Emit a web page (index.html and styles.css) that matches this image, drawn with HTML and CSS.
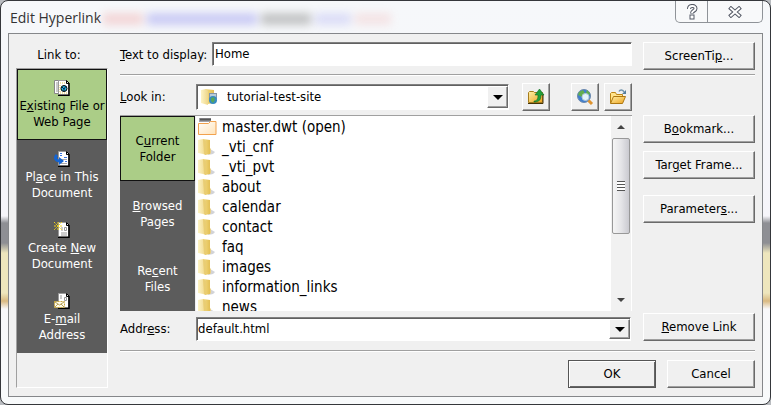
FILE: index.html
```html
<!DOCTYPE html>
<html lang="en">
<head>
<meta charset="utf-8">
<title>Edit Hyperlink</title>
<link rel="stylesheet" href="styles.css">
</head>
<body>
<svg class="defs" aria-hidden="true">
  <defs>
    <linearGradient id="gold" x1="0" x2="1"><stop offset="0" stop-color="#f3dc85"/><stop offset="1" stop-color="#e3bf55"/></linearGradient>
    <linearGradient id="pale-gold" x1="0" x2="1"><stop offset="0" stop-color="#fdf3c4"/><stop offset="1" stop-color="#eed68a"/></linearGradient>
    <linearGradient id="amber" x1="0" y1="0" x2="1" y2="1"><stop offset="0" stop-color="#fff0a8"/><stop offset="1" stop-color="#eda21d"/></linearGradient>
    <linearGradient id="cream" x1="0" y1="0" x2="1" y2="1"><stop offset="0" stop-color="#fff"/><stop offset="1" stop-color="#ffe3b8"/></linearGradient>
    <symbol id="folder" viewBox="0 0 18 18">
      <path d="M12 11l5 3-2 2-5 1z" fill="#b4b6bc" opacity=".6"/>
      <path d="M5 1l7 1v14l-5 1z" fill="url(#gold)"/>
      <path d="M0 2l5-1 3 2v14l-3-1-5-1z" fill="url(#pale-gold)"/>
      <path d="M5 1l3 2v14l-2-1z" fill="#e9cd74"/>
      <path d="M12 10l1 1v4l-1 1z" fill="#e9d088"/>
    </symbol>
    <symbol id="page" viewBox="0 0 16 16">
      <path d="M4.500 .5h8l2 3v11h-10z" fill="#fff" stroke="#999"/>
      <path d="M15 4v11.500H4" fill="none" stroke="#000" stroke-width="1.500"/>
      <path d="M12.500 .5v3h3z" fill="#ddd" stroke="#000"/>
    </symbol>
  </defs>
</svg>
<main class="dialog">
  <header class="titlebar">
    <h1>Edit Hyperlink</h1>
    <div class="glass-text" aria-hidden="true"><i class="red"></i><i class="blue"></i><i class="gray"></i><i class="blue pale"></i><i class="red pale"></i></div>
    <div class="window-buttons">
      <button class="help" aria-label="Help"><svg width="12" height="16" viewBox="0 0 12 16"><path d="M3 5c0-4 6.500-4 6.500-.5 0 2.500-3.500 2-3.500 5" fill="none" stroke="#555a66" stroke-width="4"/><rect x="4" y="11" width="4" height="4" fill="#fff" stroke="#555a66"/><path d="M2 5h2M3 5c0-4 6.500-4 6.500-.5 0 2.500-3.500 2-3.500 4.500" fill="none" stroke="#fff" stroke-width="2"/></svg></button>
      <button class="close" aria-label="Close"><svg width="14" height="12" viewBox="0 0 14 12"><path d="M3 2.500l8 7M11 2.500l-8 7" stroke="#555a66" stroke-width="4" stroke-linecap="square"/><path d="M3 2.500l8 7M11 2.500l-8 7" stroke="#fff" stroke-width="2" stroke-linecap="square"/></svg></button>
    </div>
  </header>
  <form class="content">
    <nav class="link-to" aria-labelledby="link-to-label">
      <p id="link-to-label">Link to:</p>
      <div class="places">
        <button type="button" class="selected">
          <svg width="16" height="16"><path d="M.5 .5h8v13h-8z" fill="#fff" stroke="#888"/><path d="M2 3h2M2 5h2M2 7h2M2 9h2M2 11h2" stroke="#999"/><use href="#page" width="16" height="16"/><path d="M6 3h6M6 13h8M6 5v7" stroke="#e8c84c" stroke-dasharray="1 1" fill="none"/><circle cx="10" cy="8.500" r="3" fill="#25b5d8" stroke="#000"/><path d="M8 7l2 2 2-3M10 9v2" stroke="#001a50" fill="none"/></svg>
          <span>E<u>x</u>isting File or<br>Web Page</span>
        </button>
        <button type="button">
          <svg width="16" height="16"><use href="#page" width="16" height="16"/><path d="M6 2.500h2M6 4.500h2M10 6.500h3M7 10.500h2M11 10.500h2" stroke="#3c78e0"/><path d="M7 8.500h6M7 12.500h6" stroke="#aaa"/><path d="M3 4c-3 3-1 6 3 6" fill="none" stroke="#1464d2" stroke-width="3"/><path d="M5 6l5 4-5 4z" fill="#1464d2"/></svg>
          <span>Pl<u>a</u>ce in This<br>Document</span>
        </button>
        <button type="button">
          <svg width="16" height="16"><use href="#page" width="16" height="16"/><path d="M7 6h2M7 8h2M7 11h6M7 13h6M10.500 5.500h2v3h-2z" stroke="#999" fill="none"/><path d="M4 0v8M0 4h8M0 0l8 8M8 0l-8 8" stroke="#f2d21b" stroke-dasharray="2 1"/></svg>
          <span>Create <u>N</u>ew<br>Document</span>
        </button>
        <button type="button">
          <svg width="16" height="16"><use href="#page" width="16" height="16"/><path d="M6 3h2M6 5h2M10.500 4.500h2v3h-2z" stroke="#999" fill="none"/><path d="M.5 8.500h10v6h-10z" fill="#fffbe8" stroke="#c9a63c" stroke-dasharray="2 1"/><path d="M1 9l4.500 3L10 9M1 14l3-3M10 14l-3-3" fill="none" stroke="#b8a25c"/></svg>
          <span>E-<u>m</u>ail<br>Address</span>
        </button>
      </div>
    </nav>
    <div class="fields">
      <section class="row display-row">
        <label for="display"><u>T</u>ext to display:</label>
        <input id="display" class="sunken" type="text" value="Home">
        <button type="button" class="push">ScreenTi<u>p</u>...</button>
      </section>
      <section class="browser">
        <div class="browse-main">
          <div class="lookin">
            <label class="field-label" for="lookin"><u>L</u>ook in:</label>
            <div class="combo sunken">
              <svg width="18" height="18"><path d="M4 1l9 1v13l-6 1z" fill="url(#gold)"/><path d="M0 2l5-1 2 2v14l-7-2z" fill="url(#pale-gold)"/><path d="M8 5h8v6H8z" fill="#8495a8"/><path d="M9 6h6v4H9z" fill="#b8ccd8"/><circle cx="12" cy="12" r="4" fill="#368bc2"/><path d="M10 10l3-1 1 3-2 3-2-2z" fill="#57a75b"/></svg>
              <select id="lookin"><option>tutorial-test-site</option></select>
              <span class="drop" aria-hidden="true"></span>
            </div>
            <div class="tools">
              <button type="button" class="tool" aria-label="Up one folder"><svg width="18" height="18"><path d="M1.500 4.500l1-1h4l1 1h8v10h-14z" fill="url(#amber)" stroke="#a67c1c"/><path d="M1 15.500h15V6" fill="none" stroke="#453306"/><path d="M7 13c3 0 4-2 4-6H8l4.500-6L17 7h-3c0 5-2 7-7 7z" fill="#23a03b" stroke="#116a20" stroke-width=".6"/></svg></button>
              <button type="button" class="tool web" aria-label="Browse the web"><svg width="18" height="18"><circle cx="8" cy="8" r="6.500" fill="#3f7fd0" stroke="#6c89ad"/><path d="M3 4l4-2 2 3-3 4-4-2zM11 2l3 3-1 3-3-3z" fill="#63ae50"/><circle cx="9.500" cy="9" r="3.500" fill="#e4f3fb" stroke="#b4c8d6"/><path d="M12.500 12.500l3.500 3.500" stroke="#df9430" stroke-width="3"/></svg></button>
              <button type="button" class="tool" aria-label="Browse for file"><svg width="18" height="18"><path d="M1.500 15V5.500l1-1h4l1 2h6V9" fill="#ffe38b" stroke="#bc8515"/><path d="M1.500 15.500l3-7h12l-3 7z" fill="url(#amber)" stroke="#ad7711"/><path d="M10 3.500c1-2 4-2 5 .5" fill="none" stroke="#7194ad" stroke-width="1.500"/><path d="M17 2v4h-4z" fill="#557f9d"/></svg></button>
            </div>
          </div>
          <div class="panel">
            <div class="views">
              <button type="button" class="selected">C<u>u</u>rrent<br>Folder</button>
              <button type="button"><u>B</u>rowsed<br>Pages</button>
              <button type="button">Re<u>c</u>ent<br>Files</button>
            </div>
            <div class="listing">
              <ul>
                <li><svg width="20" height="18"><path d="M1 0h12v4H1z" fill="#a4a4aa"/><path d="M2 1.500h11" stroke="#555" stroke-width="2"/><path d="M.5 5.500h10l2-2h5.500v13H.5z" fill="url(#cream)" stroke="#f2a24e"/></svg>master.dwt (open)</li>
                <li><svg width="20" height="18"><use href="#folder" width="18" height="18"/></svg>_vti_cnf</li>
                <li><svg width="20" height="18"><use href="#folder" width="18" height="18"/></svg>_vti_pvt</li>
                <li><svg width="20" height="18"><use href="#folder" width="18" height="18"/></svg>about</li>
                <li><svg width="20" height="18"><use href="#folder" width="18" height="18"/></svg>calendar</li>
                <li><svg width="20" height="18"><use href="#folder" width="18" height="18"/></svg>contact</li>
                <li><svg width="20" height="18"><use href="#folder" width="18" height="18"/></svg>faq</li>
                <li><svg width="20" height="18"><use href="#folder" width="18" height="18"/></svg>images</li>
                <li><svg width="20" height="18"><use href="#folder" width="18" height="18"/></svg>information_links</li>
                <li><svg width="20" height="18"><use href="#folder" width="18" height="18"/></svg>news</li>
              </ul>
              <div class="scrollbar" aria-hidden="true">
                <svg width="10" height="6"><path d="M1 5l4-4 4 4z" fill="#444"/></svg>
                <div class="thumb"><i></i></div>
                <svg class="down" width="10" height="6"><path d="M1 1l4 4 4-4z" fill="#444"/></svg>
              </div>
            </div>
          </div>
          <div class="address">
            <label class="field-label" for="address">Addr<u>e</u>ss:</label>
            <div class="combo sunken">
              <input id="address" type="text" value="default.html">
              <button type="button" class="drop" aria-label="Show addresses"></button>
            </div>
          </div>
        </div>
        <div class="side-buttons">
          <button type="button" class="push">B<u>o</u>okmark...</button>
          <button type="button" class="push">Tar<u>g</u>et Frame...</button>
          <button type="button" class="push params">Parameter<u>s</u>...</button>
          <button type="button" class="push remove"><u>R</u>emove Link</button>
        </div>
      </section>
      <footer>
        <button type="submit" class="push default">OK</button>
        <button type="button" class="push">Cancel</button>
      </footer>
    </div>
  </form>
</main>
</body>
</html>
```
FILE: styles.css
```css
* { box-sizing: border-box; }

body {
  margin: 0;
  background: #b9bcc0;
  color: #000;
  font: 13px/16px "DejaVu Sans Condensed", Tahoma, sans-serif;
}

button, input, select { font: inherit; color: inherit; margin: 0; padding: 0; border: 0; border-radius: 0; background: none; }
p, h1, ul { margin: 0; padding: 0; }
svg { flex: none; display: block; }
.defs { position: absolute; width: 0; height: 0; }

.dialog {
  display: flex;
  flex-direction: column;
  min-height: 100vh;
  padding: 0 7px 7px;
  border: 1px solid #35373b;
  border-radius: 8px;
  background: linear-gradient(#f6f8fa 0, #f6f5fa 215px, #8e8f94 222px, #8e8f94 242px, #eee6bd 252px, #eee6bd 292px, #d9b981 300px, #f8f8fa 308px, #f8fafb 100%);
}

.titlebar { display: flex; align-items: flex-start; height: 32px; }
.titlebar h1 { padding: 7px 2px; font: 14px/20px "Open Sans", sans-serif; color: #333; }

.glass-text { display: flex; flex: 1; gap: 4px; padding: 12px 0; filter: blur(4px); opacity: .4; }
.glass-text i { height: 12px; width: 40px; background: #777; }
.glass-text .red { background: #efa5a5; }
.glass-text .blue { width: 110px; background: #8a8aee; }
.glass-text .gray { width: 50px; }
.glass-text .pale { width: 36px; opacity: .6; }

.window-buttons { display: flex; border: 1px solid #8f9398; border-top: 0; border-radius: 0 0 5px 5px; background: #f8f9fa; }
.window-buttons button { display: flex; align-items: center; justify-content: center; height: 21px; width: 54px; }
.window-buttons .help { width: 32px; border-right: 1px solid #8f9398; }

.content {
  display: flex;
  flex: 1;
  gap: 12px;
  padding: 8px 7px;
  border: 1px solid #85878a;
  background: #f0f0f0;
}

.link-to { display: flex; flex-direction: column; width: 92px; }
.link-to p { height: 26px; padding: 5px 6px 0 0; text-align: center; }
.places { flex: 1; border: 1px solid; border-color: #a0a0a0 #fff #fff #a0a0a0; }
.places button { display: flex; flex-direction: column; align-items: center; justify-content: flex-end; gap: 2px; width: 100%; height: 71px; padding-bottom: 9px; }
.places button, .views button { border: 1px solid #5c5c5c; background: #5c5c5c; color: #fff; white-space: nowrap; }
.places .selected, .views .selected { border-color: #111; background: #abcd87; color: #000; }

.fields { flex: 1; min-width: 0; }
.row { display: flex; padding-bottom: 4px; border-bottom: 1px solid #a0a0a0; box-shadow: 0 1px #fff; }
.display-row label { width: 92px; padding-top: 5px; white-space: nowrap; }
.display-row input { flex: 1; min-width: 0; height: 24px; padding: 0 2px 2px; margin-right: 11px; }

.sunken { border: 1px solid; border-color: #808080 #fff #fff #808080; background: #fff; box-shadow: inset 1px 1px #606060; }

.push { width: 112px; height: 28px; flex: none; }
.push, .tool, .drop { border: 1px solid; border-color: #fff #6a6a6a #6a6a6a #fff; background: #f0f0f0; box-shadow: inset -1px -1px #a0a0a0; }

.browser { display: flex; gap: 11px; padding: 8px 0 9px; border-bottom: 1px solid #a0a0a0; box-shadow: 0 1px #fff; }
.browse-main { flex: 1; min-width: 0; }
.lookin, .address { display: flex; align-items: center; }
.field-label { width: 76px; flex: none; }
.combo { display: flex; flex: 1; min-width: 0; align-items: center; height: 26px; padding: 1px 0 1px 4px; }
.combo select { flex: 1; min-width: 0; height: 20px; padding-left: 8px; appearance: none; outline: 0; }
.combo input { flex: 1; min-width: 0; }
.drop { display: flex; align-items: center; justify-content: center; width: 21px; height: 22px; }
.drop::before { content: ""; border: 5px solid transparent; border-top-color: #000; border-bottom: 0; }

.tools { display: flex; gap: 5px; margin-left: 13px; }
.tool { display: flex; align-items: center; justify-content: center; width: 28px; height: 28px; }
.tool.web { margin-left: 16px; }

.panel { display: flex; height: 196px; margin: 4px 0 6px; border-top: 1px solid #a0a0a0; }
.views { display: flex; flex-direction: column; width: 75px; }
.views button { flex: 1; }
.listing { display: flex; flex: 1; min-width: 0; margin-left: 1px; background: #fff; border-right: 1px solid #fff; }
.listing ul { flex: 1; min-width: 0; overflow: hidden; padding-top: 1px; list-style: none; }
.listing li { display: flex; align-items: center; gap: 4px; height: 20px; padding-left: 2px; font-size: 15px; }

.scrollbar { display: flex; flex-direction: column; align-items: center; width: 20px; padding: 8px 1px; background: #f1f1f1; }
.thumb { display: flex; align-items: center; justify-content: center; width: 18px; height: 96px; margin-top: 8px; border: 1px solid #989898; border-radius: 2px; background: linear-gradient(90deg, #f5f5f5, #e5e5e8 50%, #cacad0); }
.thumb i { width: 8px; height: 10px; background: repeating-linear-gradient(#555 0 1px, #fff 1px 3px); }
.down { margin-top: auto; }

.address .combo { height: 24px; padding-left: 1px; margin-right: 1px; }
.address .drop { height: 20px; }

.side-buttons { display: flex; flex-direction: column; gap: 8px; padding-top: 32px; }
.side-buttons .params { margin-top: 8px; }
.side-buttons .remove { margin-top: auto; }

footer { display: flex; justify-content: flex-end; gap: 11px; padding-top: 9px; }
footer .push { width: 88px; }
.push.default { border: 1px solid #555; box-shadow: inset 1px 1px #fff, inset -1px -1px #666; }

@media (max-width: 560px) {
  .side-buttons { padding-top: 0; }
  .browser { flex-direction: column; }
}
```
